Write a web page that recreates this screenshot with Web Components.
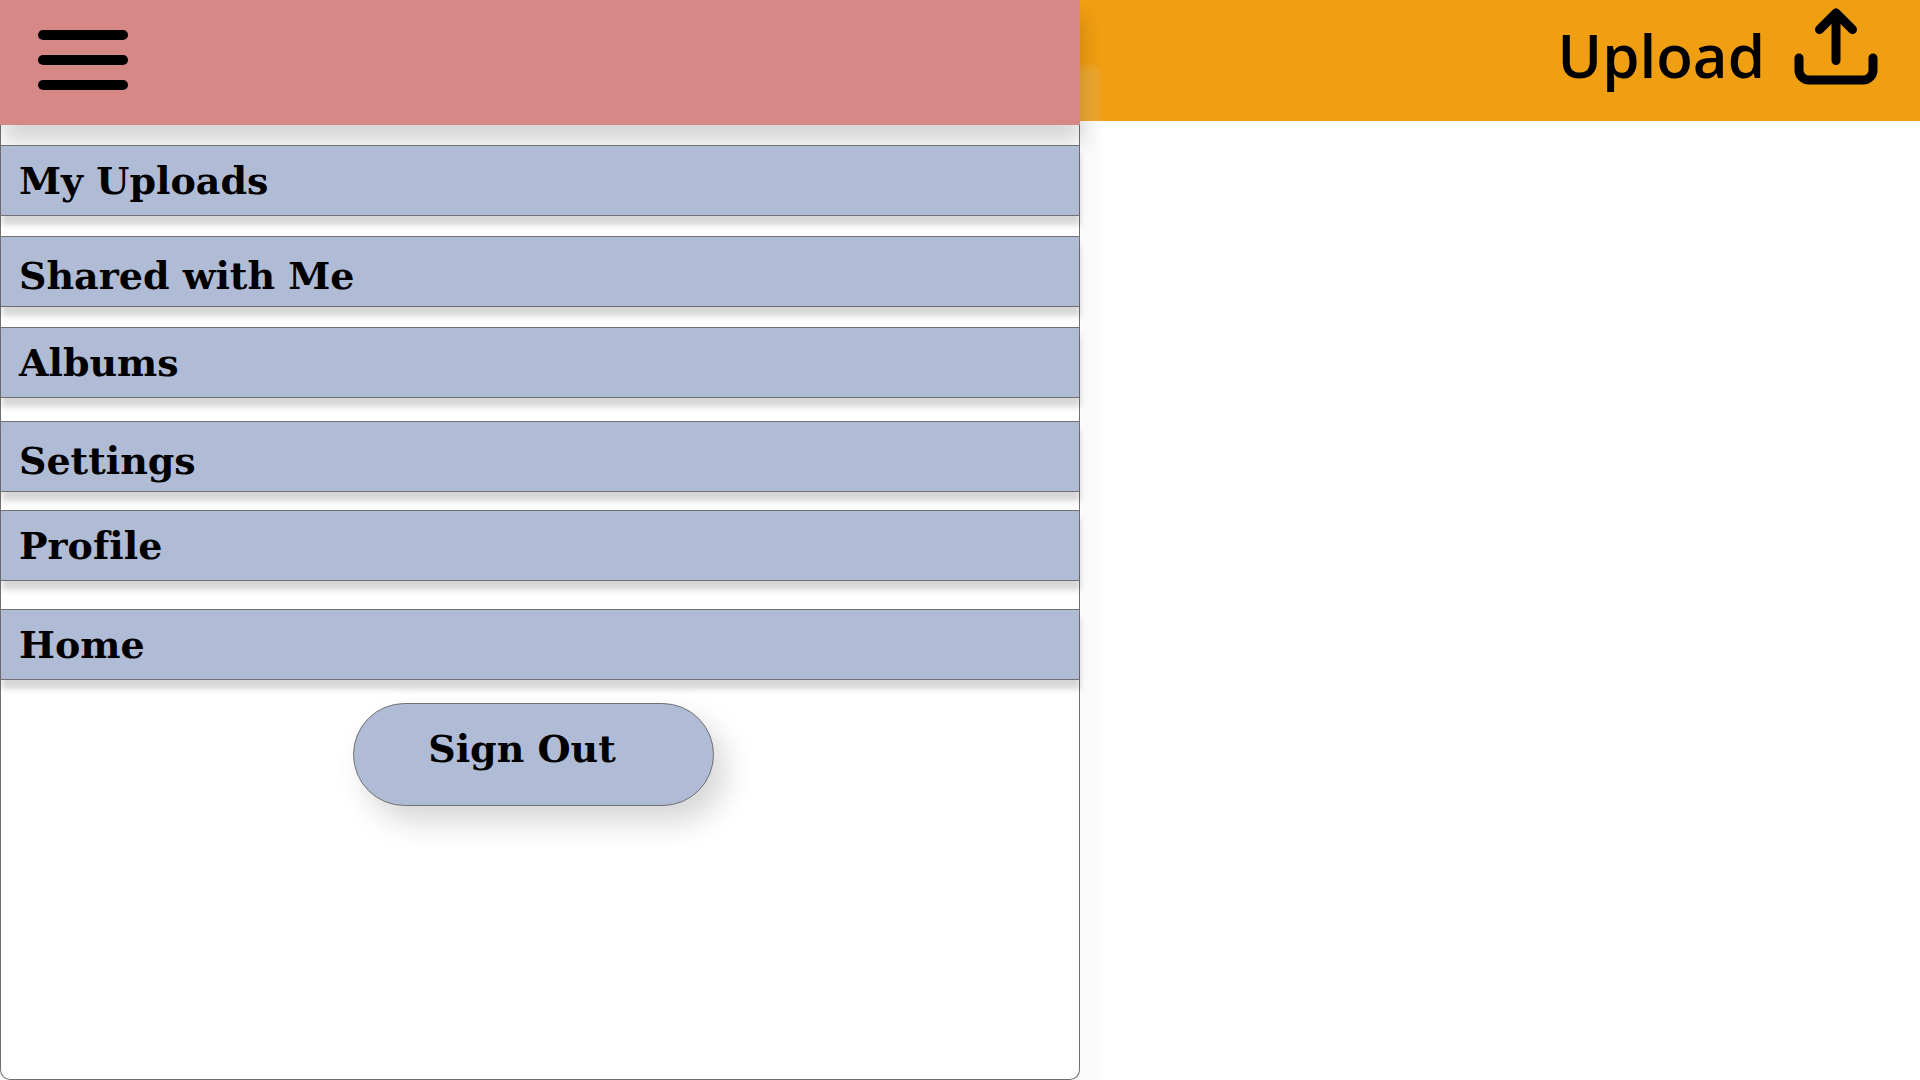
<!DOCTYPE html>
<html lang="en">
<head>
<meta charset="utf-8">
<title>My Uploads</title>
<style>
  html, body { margin: 0; background: #fff; color: #000; }
</style>
</head>
<body>
<photo-app>
  <side-drawer slot="drawer">
    <drawer-header slot="header"></drawer-header>
    <drawer-link href="#uploads">My Uploads</drawer-link>
    <drawer-link href="#shared" class="low">Shared with Me</drawer-link>
    <drawer-link href="#albums">Albums</drawer-link>
    <drawer-link href="#settings" class="low after-group">Settings</drawer-link>
    <drawer-link href="#profile">Profile</drawer-link>
    <drawer-link href="#home" class="apart">Home</drawer-link>
    <sign-out-button slot="footer">Sign Out</sign-out-button>
  </side-drawer>
  <top-bar slot="bar"><upload-button>Upload</upload-button></top-bar>
</photo-app>

<script>
  const define = (name, html, setup) => {
    const template = document.createElement('template');
    template.innerHTML = html;
    customElements.define(name, class extends HTMLElement {
      constructor() {
        super();
        this.attachShadow({ mode: 'open' }).append(template.content.cloneNode(true));
      }
      connectedCallback() { if (setup) setup(this); }
    });
  };

  define('photo-app', `
    <style>
      :host { display: flex; min-height: 100vh; overflow: hidden; }
      .drawer { flex: 0 0 56.25%; display: flex; position: relative; z-index: 1; }
      main { flex: 1; min-width: 0; }
    </style>
    <div class="drawer"><slot name="drawer"></slot></div>
    <main><slot name="bar"></slot><slot></slot></main>`);

  define('side-drawer', `
    <style>
      :host {
        flex: 1; display: flex; flex-direction: column; box-sizing: border-box;
        background: #fff; border: 1px solid #707070; border-top: 0;
        border-radius: 0 0 10px 10px;
        box-shadow: 20px 67px 6px rgba(222, 222, 222, .15);
      }
      nav { display: flex; flex-direction: column; gap: 20px; padding-top: 20px; }
      ::slotted(.after-group) { margin-top: 3px; margin-bottom: -2px; }
      ::slotted(.apart) { margin-top: 8px; }
      footer { display: flex; justify-content: center; padding: 23px 30px 23px 16px; }
    </style>
    <slot name="header"></slot>
    <nav aria-label="Main"><slot></slot></nav>
    <footer><slot name="footer"></slot></footer>`);

  define('drawer-header', `
    <style>
      :host {
        display: flex; align-items: center; height: 125px; margin: 0 -1px;
        box-sizing: border-box; padding: 0 38px 5px; background: #d68887;
        box-shadow: 2px 18px 20px rgba(0, 0, 0, .16);
      }
      button { display: block; padding: 0; border: 0; background: none; cursor: pointer; }
      svg { display: block; }
    </style>
    <button type="button" aria-label="Menu">
      <svg width="90" height="60" viewBox="0 0 90 60" aria-hidden="true">
        <rect width="90" height="10" rx="5"/>
        <rect y="25" width="90" height="10" rx="5"/>
        <rect y="50" width="90" height="10" rx="5"/>
      </svg>
    </button>`);

  define('drawer-link', `
    <style>
      :host { display: block; --text-top: 9px; }
      :host(.low) { --text-top: 13px; }
      a {
        display: block; box-sizing: border-box; height: 71px;
        padding: var(--text-top) 18px 0;
        border: solid #707070; border-width: 1px 0;
        background: #b0bbd6; box-shadow: 1px 9px 6px rgba(0, 0, 0, .16);
        color: #000; text-decoration: none;
        font: bold 38px/52px "DejaVu Serif", serif;
        font-variant-ligatures: none;
      }
    </style>
    <a><slot></slot></a>`,
    el => el.shadowRoot.querySelector('a').setAttribute('href', el.getAttribute('href')));

  define('sign-out-button', `
    <style>
      :host { display: block; }
      button {
        display: flex; align-items: center; justify-content: center;
        box-sizing: border-box; width: 361px; height: 103px; padding: 0 22px 12px 0;
        border: 1px solid #707070; border-radius: 52px; background: #b0bbd6;
        box-shadow: 12px 16px 30px rgba(0, 0, 0, .16);
        color: #000; cursor: pointer;
        font: bold 38px/52px "DejaVu Serif", serif;
      }
    </style>
    <button type="button"><slot></slot></button>`);

  define('top-bar', `
    <style>
      :host {
        display: flex; justify-content: flex-end; box-sizing: border-box;
        height: 121px; padding: 8px 42px 0; background: #f09e12;
      }
    </style>
    <slot></slot>`);

  define('upload-button', `
    <style>
      :host { display: block; }
      button {
        display: flex; align-items: flex-start; gap: 29px; padding: 0;
        border: 0; background: none; color: #000; cursor: pointer;
        font: 600 60px/94px "Open Sans", sans-serif;
      }
      svg { display: block; fill: none; stroke: #000; stroke-width: 9; stroke-linecap: round; stroke-linejoin: round; }
    </style>
    <button type="button">
      <span><slot></slot></span>
      <svg width="84" height="78" viewBox="0 0 84 78" aria-hidden="true">
        <path d="M42 52.500V5M25.500 21.500 42 5 58.500 21.500"/>
        <path d="M5 50V62A10 10 0 0 0 15 72H69A10 10 0 0 0 79 62V50"/>
      </svg>
    </button>`);
</script>
</body>
</html>
